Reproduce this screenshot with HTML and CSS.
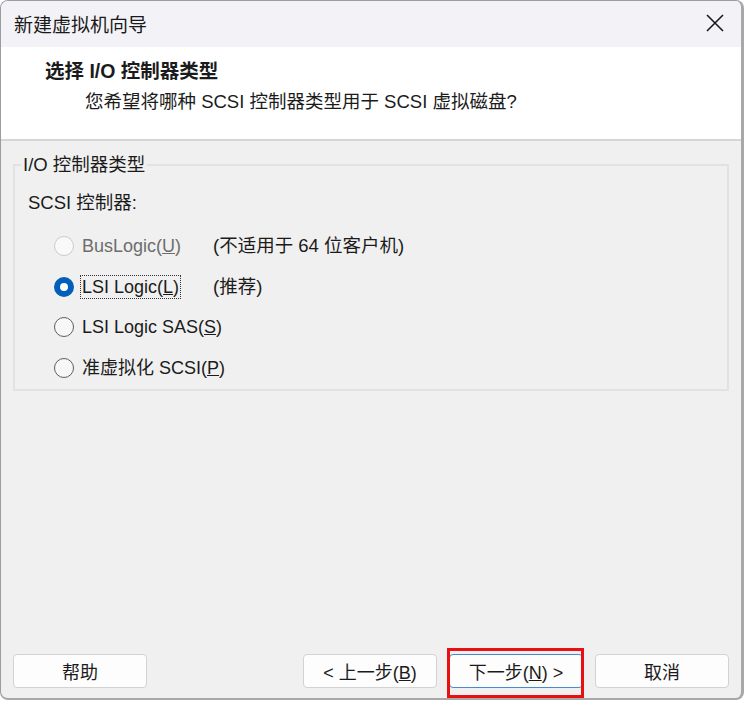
FILE: index.html
```html
<!DOCTYPE html>
<html lang="zh-CN">
<head>
  <meta charset="UTF-8">
  <meta name="viewport" content="width=device-width, initial-scale=1.0">
  <title>新建虚拟机向导</title>
  <link rel="stylesheet" href="styles.css">
</head>
<body>
  <div class="window">
    <div class="titlebar">
      <span class="title">新建虚拟机向导</span>
      <button class="close-button" aria-label="关闭">
        <svg width="18" height="18" viewBox="0 0 18 18">
          <path d="M1 1 L17 17 M17 1 L1 17" stroke="#1a1a1a" stroke-width="1.6" fill="none"/>
        </svg>
      </button>
    </div>

    <div class="header">
      <div class="header-title">选择 I/O 控制器类型</div>
      <div class="header-sub">您希望将哪种 SCSI 控制器类型用于 SCSI 虚拟磁盘?</div>
    </div>

    <div class="content">
      <fieldset class="group">
        <legend>I/O 控制器类型</legend>
        <div class="group-label">SCSI 控制器:</div>
        <div class="options">
          <div class="option disabled">
            <span class="radio"></span>
            <span class="option-text">BusLogic(<u>U</u>)</span>
          </div>
          <div class="note">(不适用于 64 位客户机)</div>

          <div class="option">
            <span class="radio checked"></span>
            <span class="option-text focused">LSI Logic(<u>L</u>)</span>
          </div>
          <div class="note">(推荐)</div>

          <div class="option">
            <span class="radio"></span>
            <span class="option-text">LSI Logic SAS(<u>S</u>)</span>
          </div>
          <div class="note"></div>

          <div class="option">
            <span class="radio"></span>
            <span class="option-text">准虚拟化 SCSI(<u>P</u>)</span>
          </div>
          <div class="note"></div>
        </div>
      </fieldset>

      <div class="buttons">
        <button class="btn">帮助</button>
        <div class="spacer"></div>
        <button class="btn">&lt; 上一步(<u>B</u>)</button>
        <span class="highlight">
          <button class="btn default">下一步(<u>N</u>) &gt;</button>
        </span>
        <button class="btn">取消</button>
      </div>
    </div>
  </div>
</body>
</html>
```

FILE: styles.css
```css
* {
    box-sizing: border-box;
}
body {
    margin: 0;
    background-color: #ffffff;
    font-family: "Liberation Sans", "Noto Sans CJK SC", sans-serif;
    color: #1b1b1b;
}
.window {
    width: 744px;
    height: 700px;
    display: flex;
    flex-direction: column;
    border: 1px solid #9c9c9c;
    border-right: 3px solid #a8a8a8;
    border-bottom: 2px solid #a8a8a8;
    border-radius: 8px;
    overflow: hidden;
    background-color: #f0f0f0;
}
.titlebar {
    height: 46px;
    flex-shrink: 0;
    display: flex;
    align-items: center;
    justify-content: space-between;
    padding: 0 14px 2px 13px;
    background-color: #f3f3f7;
}
.title {
    font-family: "Noto Sans CJK SC", sans-serif;
    font-size: 19px;
    color: #1a1a1a;
}
.close-button {
    background: transparent;
    border: none;
    padding: 0;
    width: 24px;
    height: 24px;
    display: flex;
    align-items: center;
    justify-content: center;
}
.header {
    height: 94px;
    flex-shrink: 0;
    background-color: #ffffff;
    border-bottom: 2px solid #d6d6d6;
    padding: 12px 0 0 44px;
}
.header-title {
    font-weight: bold;
    font-size: 19.5px;
    line-height: 25px;
}
.header-sub {
    font-size: 18.5px;
    line-height: 24px;
    margin: 6px 0 0 40px;
}
.content {
    flex: 1;
    display: flex;
    flex-direction: column;
    padding: 0 12px 10px 12px;
}
.group {
    margin: 13px 0 0 0;
    padding: 0 0 0 13px;
    border: 2px solid #e2e2e2;
    height: 237px;
}
.group legend {
    font-size: 18.5px;
    line-height: 22px;
    padding: 0 2px;
    margin: 2px 0 0 -7px;
}
.group-label {
    font-size: 18.5px;
    line-height: 24px;
    margin-top: 15px;
}
.options {
    display: grid;
    grid-template-columns: 159px 1fr;
    grid-auto-rows: 40.6px;
    margin: 11px 0 0 26px;
    white-space: nowrap;
}
.option {
    display: flex;
    align-items: center;
    gap: 6px;
    font-size: 18px;
}
.note {
    display: flex;
    align-items: center;
    font-size: 18.5px;
    padding-bottom: 4px;
}
.option-text {
    line-height: 22px;
    padding: 0 1px;
    border: 1px solid transparent;
}
.option-text.focused {
    border: 1px dotted #333333;
}
.disabled .option-text {
    color: #6d6d6d;
}
.radio {
    width: 20px;
    height: 20px;
    flex-shrink: 0;
    border-radius: 50%;
    border: 1px solid #5e5e5e;
    background-color: #f7f7f7;
}
.disabled .radio {
    border-color: #cacaca;
    background-color: #f9f9f9;
}
.radio.checked {
    border: 6px solid #005fb8;
    background-color: #ffffff;
}
.buttons {
    margin-top: auto;
    display: flex;
    gap: 12px;
}
.spacer {
    flex: 1;
}
.btn {
    width: 134px;
    height: 34px;
    padding: 0;
    background-color: #fdfdfd;
    border: 1px solid #d2d2d2;
    border-radius: 4px;
    font-family: "Liberation Sans", "Noto Sans CJK SC", sans-serif;
    font-size: 18px;
    color: #1b1b1b;
}
.btn.default {
    border-color: #4a88cf;
}
.highlight {
    position: relative;
    display: flex;
}
.highlight::after {
    content: "";
    position: absolute;
    top: -6px;
    bottom: -10px;
    left: -2px;
    right: -1px;
    border: 3px solid #e81010;
    pointer-events: none;
}
```
